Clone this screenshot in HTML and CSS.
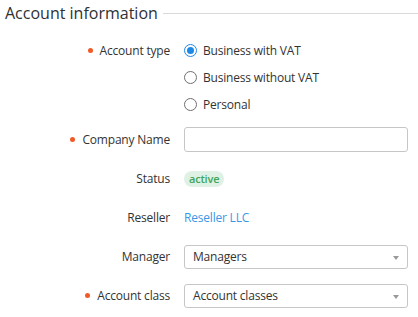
FILE: index.html
```html
<!DOCTYPE html>
<html lang="en">
<head>
    <meta charset="UTF-8">
    <title>Account information</title>
    <link rel="stylesheet" href="styles.css">
</head>
<body>
    <div class="section">
        <div class="section-title">
            <h2>Account information</h2>
            <div class="section-line"></div>
        </div>

        <div class="row row-radios">
            <div class="label required">Account type</div>
            <div class="radio-group">
                <label class="radio"><span class="radio-box checked"></span>Business with VAT</label>
                <label class="radio"><span class="radio-box"></span>Business without VAT</label>
                <label class="radio"><span class="radio-box"></span>Personal</label>
            </div>
        </div>

        <div class="row">
            <div class="label required">Company Name</div>
            <input class="text-input" type="text">
        </div>

        <div class="row">
            <div class="label">Status</div>
            <span class="badge">active</span>
        </div>

        <div class="row">
            <div class="label">Reseller</div>
            <a class="link" href="#">Reseller LLC</a>
        </div>

        <div class="row">
            <div class="label">Manager</div>
            <div class="select">Managers<span class="caret"></span></div>
        </div>

        <div class="row">
            <div class="label required">Account class</div>
            <div class="select">Account classes<span class="caret"></span></div>
        </div>
    </div>
</body>
</html>
```

FILE: styles.css
```css
* {
    margin: 0;
    padding: 0;
    box-sizing: border-box;
}

body {
    font-family: 'Open Sans', sans-serif;
    font-size: 12px;
    letter-spacing: -0.2px;
    color: #333;
    background: #fff;
}

.section {
    width: 418px;
}

/* Title with line */
.section-title {
    display: flex;
    align-items: center;
    height: 26px;
    padding-left: 5px;
    margin-bottom: 11px;
}

.section-title h2 {
    font-size: 16px;
    font-weight: normal;
    letter-spacing: 0;
    color: #2d3135;
    line-height: 26px;
}

.section-line {
    flex: 1;
    height: 1px;
    background: #dadada;
    margin-left: 5px;
}

/* Form rows */
.row {
    display: flex;
    align-items: center;
    height: 25px;
    margin-bottom: 14px;
}

.row-radios {
    align-items: flex-start;
    height: auto;
    margin-bottom: 9px;
}

.label {
    width: 184px;
    padding-right: 14px;
    text-align: right;
    line-height: 27px;
    flex-shrink: 0;
}

.required::before {
    content: "";
    display: inline-block;
    width: 5px;
    height: 5px;
    border-radius: 50%;
    background: #f05a28;
    margin-right: 7px;
    vertical-align: 2px;
}

/* Radios */
.radio {
    display: flex;
    align-items: center;
    height: 27px;
}

.radio-box {
    width: 13px;
    height: 13px;
    border: 1px solid #6f6f6f;
    border-radius: 50%;
    margin-right: 6px;
    position: relative;
}

.radio-box.checked {
    border-color: #1e88e5;
}

.radio-box.checked::after {
    content: "";
    position: absolute;
    top: 2px;
    left: 2px;
    width: 7px;
    height: 7px;
    border-radius: 50%;
    background: #1e88e5;
}

/* Inputs */
.text-input {
    width: 224px;
    height: 25px;
    border: 1px solid #c6c6c6;
    border-radius: 3px;
    outline: none;
    font-family: inherit;
    font-size: 12px;
    padding: 0 8px;
}

.select {
    width: 224px;
    height: 24px;
    border: 1px solid #c6c6c6;
    border-radius: 3px;
    padding: 0 8px;
    line-height: 22px;
    position: relative;
}

.caret {
    position: absolute;
    right: 8px;
    top: 10px;
    border-left: 3.5px solid transparent;
    border-right: 3.5px solid transparent;
    border-top: 4px solid #999;
}

.badge {
    display: inline-block;
    height: 16px;
    line-height: 16px;
    padding: 0 5px;
    border-radius: 8px;
    background: #dff1e4;
    color: #43a55a;
    font-size: 11px;
    font-weight: 600;
}

.link {
    color: #3a98e6;
    text-decoration: none;
}
```
